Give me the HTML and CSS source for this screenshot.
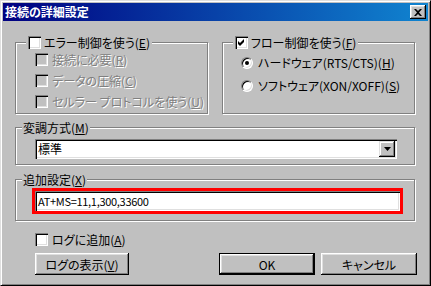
FILE: index.html
```html
<!DOCTYPE html>
<html lang="ja">
<head>
    <meta charset="UTF-8">
    <title>接続の詳細設定</title>
    <link rel="stylesheet" href="styles.css">
</head>
<body>
    <div class="window">
        <div class="titlebar">
            <span class="title">接続の詳細設定</span>
            <span class="close">
                <svg width="8" height="7" viewBox="0 0 8 7"><path d="M0 0h2l2 2 2-2h2L5 3.5 8 7H6L4 5 2 7H0l3-3.5z" fill="#000"/></svg>
            </span>
        </div>

        <div class="dialog">
            <div class="top-row">
                <fieldset class="group">
                    <legend><span class="box"></span><span>エラー制御を使う(<u>E</u>)</span></legend>
                    <div class="options options-check">
                        <div class="option disabled"><span class="box"></span><span>接続に必要(<u>R</u>)</span></div>
                        <div class="option disabled"><span class="box"></span><span>データの圧縮(<u>C</u>)</span></div>
                        <div class="option disabled"><span class="box"></span><span>セルラー プロトコルを使う(<u>U</u>)</span></div>
                    </div>
                </fieldset>

                <fieldset class="group">
                    <legend><span class="box"><svg width="13" height="13" viewBox="0 0 13 13"><path d="M3 5v3l2 2 4-4V3L5 7z" fill="#000"/></svg></span><span>フロー制御を使う(<u>F</u>)</span></legend>
                    <div class="options options-radio">
                        <div class="option"><span class="radio"><span class="dot"></span></span><span>ハードウェア(RTS/CTS)(<u>H</u>)</span></div>
                        <div class="option"><span class="radio"></span><span>ソフトウェア(XON/XOFF)(<u>S</u>)</span></div>
                    </div>
                </fieldset>
            </div>

            <fieldset class="group group-modem">
                <legend class="plain"><span>変調方式(<u>M</u>)</span></legend>
                <div class="group-body">
                    <div class="combo">
                        <span class="combo-text">標準</span>
                        <span class="combo-btn"><svg width="7" height="4" viewBox="0 0 7 4"><path d="M0 0h7L3.5 4z" fill="#000"/></svg></span>
                    </div>
                </div>
            </fieldset>

            <fieldset class="group group-extra">
                <legend class="plain"><span>追加設定(<u>X</u>)</span></legend>
                <div class="group-body">
                    <div class="highlight">
                        <div class="edit">AT+MS=11,1,300,33600</div>
                    </div>
                </div>
            </fieldset>

            <div class="footer">
                <div class="footer-left">
                    <div class="option"><span class="box"></span><span>ログに追加(<u>A</u>)</span></div>
                    <button class="btn btn-log">ログの表示(<u>V</u>)</button>
                </div>
                <div class="footer-right">
                    <button class="btn btn-default">OK</button>
                    <button class="btn">キャンセル</button>
                </div>
            </div>
        </div>
    </div>
</body>
</html>
```

FILE: styles.css
```css
body {
    margin: 0;
    background-color: #c0c0c0;
    font-family: "Noto Sans CJK JP", "Liberation Sans", sans-serif;
    font-size: 12px;
    font-feature-settings: "palt";
    color: #000;
}

.window {
    width: 431px;
    height: 286px;
    box-sizing: border-box;
    background-color: #c0c0c0;
    border: 1px solid;
    border-color: #dfdfdf #000 #000 #dfdfdf;
    box-shadow: inset 1px 1px #fff, inset -1px -1px #808080;
    padding: 2px;
}

.titlebar {
    height: 18px;
    display: flex;
    align-items: center;
    justify-content: space-between;
    padding: 0 2px 0 2px;
    background: linear-gradient(to right, #000080, #1084d0);
}

.title {
    color: #fff;
    font-weight: bold;
    font-size: 12px;
    line-height: 14px;
}

.close {
    width: 16px;
    height: 14px;
    box-sizing: border-box;
    display: flex;
    align-items: center;
    justify-content: center;
    background-color: #c0c0c0;
    box-shadow: inset -1px -1px #000, inset 1px 1px #fff, inset -2px -2px #808080, inset 2px 2px #dfdfdf;
}

.dialog {
    padding: 15px 13px 0 12px;
}

.top-row {
    display: grid;
    grid-template-columns: 1fr 1fr;
    column-gap: 14px;
}

.group {
    margin: 0;
    padding: 0;
    min-width: 0;
    box-sizing: border-box;
    border: 1px solid #808080;
    box-shadow: 1px 1px 0 #fff, inset 1px 1px 0 #fff;
}

.top-row .group {
    height: 78px;
}

.group legend {
    margin-left: 10px;
    padding: 0 2px;
    height: 13px;
    line-height: 13px;
    display: flex;
    align-items: center;
    gap: 3px;
    white-space: nowrap;
    background-color: #c0c0c0;
}

.group legend.plain {
    margin-left: 6px;
    padding: 0 1px;
}

.options {
    display: flex;
    flex-direction: column;
}

.options-check {
    padding: 4px 0 0 19px;
    gap: 8px;
}

.options-radio {
    padding: 7px 0 0 18px;
    gap: 10px;
}

.option {
    display: flex;
    align-items: center;
    gap: 4px;
    height: 13px;
    line-height: 13px;
    white-space: nowrap;
}

.options-radio .option {
    gap: 5px;
}

.option.disabled {
    color: #808080;
    text-shadow: 1px 1px 0 #fff;
}

.box {
    width: 13px;
    height: 13px;
    flex: none;
    box-sizing: border-box;
    background-color: #fff;
    box-shadow: inset 1px 1px #808080, inset 2px 2px #000, inset -1px -1px #fff, inset -2px -2px #dfdfdf;
}

.box svg {
    display: block;
}

.disabled .box {
    background-color: #c0c0c0;
}

.radio {
    width: 12px;
    height: 12px;
    flex: none;
    box-sizing: border-box;
    border-radius: 50%;
    border: 1px solid;
    border-color: #808080 #fff #fff #808080;
    background-color: #fff;
    box-shadow: inset 1px 1px #000, inset -1px -1px #dfdfdf;
    display: flex;
    align-items: center;
    justify-content: center;
}

.dot {
    width: 4px;
    height: 4px;
    border-radius: 50%;
    background-color: #000;
}

.group-modem {
    margin-top: 7px;
}

.group-modem .group-body {
    padding: 5px 17px 5px 19px;
}

.combo {
    height: 20px;
    box-sizing: border-box;
    padding: 2px;
    display: flex;
    align-items: center;
    background-color: #fff;
    box-shadow: inset 1px 1px #808080, inset 2px 2px #000, inset -1px -1px #fff, inset -2px -2px #dfdfdf;
}

.combo-text {
    flex: 1;
    padding-left: 1px;
    line-height: 16px;
}

.combo-btn {
    width: 16px;
    height: 16px;
    box-sizing: border-box;
    display: flex;
    align-items: center;
    justify-content: center;
    background-color: #c0c0c0;
    box-shadow: inset -1px -1px #000, inset 1px 1px #dfdfdf, inset -2px -2px #808080, inset 2px 2px #fff;
}

.group-extra {
    margin-top: 8px;
}

.group-extra .group-body {
    padding: 2px 11px 6px 16px;
}

.highlight {
    border: 3px solid #ff0000;
}

.edit {
    height: 20px;
    box-sizing: border-box;
    padding: 2px 3px;
    font-size: 11px;
    line-height: 16px;
    letter-spacing: -0.3px;
    background-color: #fff;
    box-shadow: inset 1px 1px #808080, inset 2px 2px #000, inset -1px -1px #fff, inset -2px -2px #dfdfdf;
    white-space: nowrap;
}

.footer {
    margin-top: 12px;
    margin-right: -2px;
    padding-left: 20px;
    display: flex;
    justify-content: space-between;
    align-items: flex-end;
}

.footer-left {
    display: flex;
    flex-direction: column;
    gap: 7px;
}

.footer-right {
    display: flex;
    gap: 6px;
}

.btn {
    width: 96px;
    height: 22px;
    margin: 0;
    padding: 0;
    border: none;
    font: inherit;
    color: #000;
    background-color: #c0c0c0;
    box-shadow: inset -1px -1px #000, inset 1px 1px #fff, inset -2px -2px #808080, inset 2px 2px #dfdfdf;
}

.btn-log {
    width: 94px;
}

.btn-default {
    box-shadow: inset 0 0 0 1px #000, inset -2px -2px #000, inset 2px 2px #fff, inset -3px -3px #808080, inset 3px 3px #dfdfdf;
}
```
